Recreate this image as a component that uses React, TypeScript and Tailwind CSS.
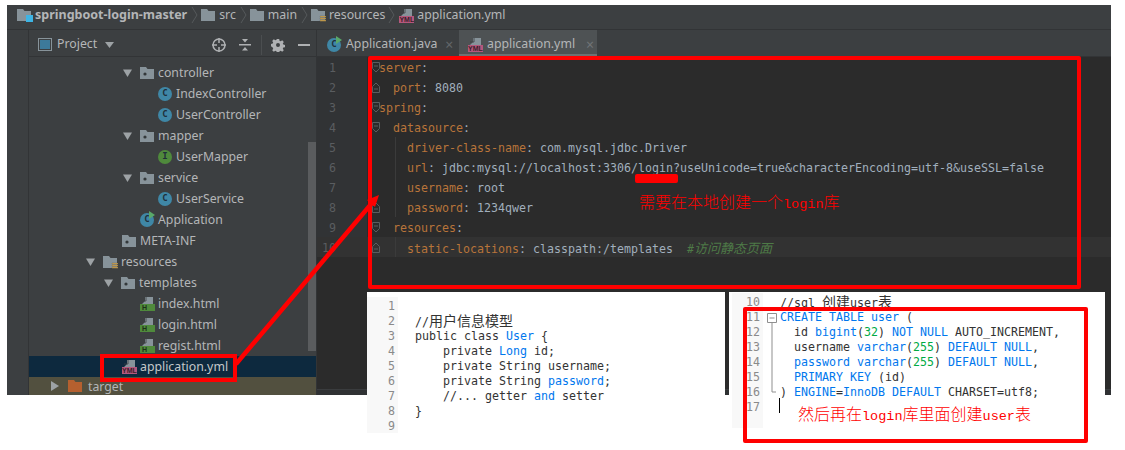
import React from 'react';

const uiFont = "font-['Noto_Sans','Noto_Sans_CJK_SC',sans-serif]";
const monoFont = "font-['DejaVu_Sans_Mono','Noto_Sans_CJK_SC',monospace]";

const Folder = ({ lines, blue, orange }: { lines?: boolean; blue?: boolean; orange?: boolean }) => (
    <svg width="16" height="14" viewBox="0 0 16 14" className="shrink-0">
        <path d="M0 1h6l1.5 2H14v10H0z" fill={orange ? '#b5602f' : '#87939a'} />
        {lines && <path d="M9 8h6v1.2H9zM9 10h6v1.2H9zM9 12h6v1.2H9z" fill="#d5a94e" stroke="#3c3f41" strokeWidth="0.2" />}
        {blue && <rect x="9" y="7" width="7" height="7" fill="#3db4e4" />}
    </svg>
);

const PackageFolder = () => (
    <svg width="14" height="14" viewBox="0 0 14 14" className="shrink-0">
        <path d="M0 1h6l1.5 2H14v10H0z" fill="#87939a" />
        <circle cx="5" cy="8" r="1.6" fill="#33383a" />
    </svg>
);

const Round = ({ letter, bg, run }: { letter: string; bg: string; run?: boolean }) => (
    <span className={`relative flex h-[14px] w-[14px] shrink-0 items-center justify-center rounded-full text-[9px] font-bold leading-none text-[#20303a] ${bg} ${monoFont}`}>
        {letter}
        {run && (
            <svg width="8" height="8" viewBox="0 0 8 8" className="absolute -right-[2px] -top-[2px]">
                <path d="M1 0l6 4-6 4z" fill="#59a869" />
            </svg>
        )}
    </span>
);

const FileBadge = ({ label, band, text }: { label: string; band: string; text: string }) => (
    <span className="relative block h-[15px] w-[15px] shrink-0">
        <svg width="15" height="9" viewBox="0 0 15 9" className="absolute left-0 top-0">
            <path d="M2 8l3-3V1h8v7z" fill="#87939a" />
            <path d="M6 1v4H2" fill="none" stroke="#3c3f41" strokeWidth="0.8" />
        </svg>
        <span className={`absolute bottom-0 left-0 flex h-[7px] w-[15px] items-center justify-center font-['Liberation_Sans',sans-serif] text-[7px] font-bold leading-none ${band} ${text}`}>
            {label}
        </span>
    </span>
);

const Html = () => <FileBadge label="H" band="bg-[#4f8a3c]" text="text-[#1d2f18] justify-start pl-[2px]" />;
const Yml = () => <FileBadge label="YML" band="bg-[#b4577c]" text="text-[#3a1f2b]" />;

const Chevron = () => (
    <svg width="7" height="18" viewBox="0 0 7 18" className="shrink-0">
        <path d="M1 1l5 8-5 8" fill="none" stroke="#55595b" strokeWidth="1" />
    </svg>
);

const Arrow = ({ open }: { open?: boolean }) => (
    <svg width="10" height="10" viewBox="0 0 10 10" className="shrink-0">
        {open ? <path d="M0 1.5h9L4.5 9z" fill="#9da2a5" /> : <path d="M1 0l8 5-8 5z" fill="#9da2a5" />}
    </svg>
);

const TreeRow = ({ pad, arrow, icon, label, className }: { pad: string; arrow?: boolean; icon: React.ReactNode; label: string; className?: string }) => (
    <div className={`flex h-[21px] items-center ${pad} ${className ?? ''}`}>
        {arrow && <span className="mr-[7px]"><Arrow open /></span>}
        <span className="mr-[4px] flex w-[14px] justify-start">{icon}</span>
        <span className="pt-[2px]">{label}</span>
    </div>
);

const Tree = () => (
    <div className={`pt-[5px] text-[12.3px] text-[#b4b6b8] ${uiFont}`}>
        <TreeRow pad="pl-[94px]" arrow icon={<PackageFolder />} label="controller" />
        <TreeRow pad="pl-[129px]" icon={<Round letter="C" bg="bg-[#3f87a6]" />} label="IndexController" />
        <TreeRow pad="pl-[129px]" icon={<Round letter="C" bg="bg-[#3f87a6]" />} label="UserController" />
        <TreeRow pad="pl-[94px]" arrow icon={<PackageFolder />} label="mapper" />
        <TreeRow pad="pl-[129px]" icon={<Round letter="I" bg="bg-[#4f8a3c]" />} label="UserMapper" />
        <TreeRow pad="pl-[94px]" arrow icon={<PackageFolder />} label="service" />
        <TreeRow pad="pl-[129px]" icon={<Round letter="C" bg="bg-[#3f87a6]" />} label="UserService" />
        <TreeRow pad="pl-[111px]" icon={<Round letter="C" bg="bg-[#3f87a6]" run />} label="Application" />
        <TreeRow pad="pl-[93px]" icon={<PackageFolder />} label="META-INF" />
        <TreeRow pad="pl-[57px]" arrow icon={<Folder lines />} label="resources" />
        <TreeRow pad="pl-[75px]" arrow icon={<PackageFolder />} label="templates" />
        <TreeRow pad="pl-[111px]" icon={<Html />} label="index.html" />
        <TreeRow pad="pl-[111px]" icon={<Html />} label="login.html" />
        <TreeRow pad="pl-[111px]" icon={<Html />} label="regist.html" />
        <TreeRow pad="pl-[93px]" icon={<Yml />} label="application.yml" className="bg-[#0d293e] text-[#c4c8ca]" />
        <div className="flex h-[18px] items-center bg-[#52503f] pl-[21px]">
            <span className="mr-[8px]"><Arrow /></span>
            <span className="mr-[4px]"><Folder orange /></span>
            <span className="pt-[2px] leading-[16px]">target</span>
        </div>
    </div>
);

const Key = ({ children }: { children: React.ReactNode }) => <span className="text-[#b8743a]">{children}</span>;

const FoldMark = ({ shape }: { shape: 'top' | 'bottom' }) => (
    <svg width="8" height="11" viewBox="0 0 8 11" className="absolute left-[5px] top-[5px]">
        {shape === 'top' ? (
            <path d="M.5.5h7v6l-3.5 3.5-3.5-3.5zM2 4h4" fill="none" stroke="#5a5d5f" />
        ) : (
            <path d="M.5 10.5h7v-6l-3.5-3.5-3.5 3.5zM2 7h4" fill="none" stroke="#5a5d5f" />
        )}
    </svg>
);

type YamlLine = { n: number; indent: string; fold?: 'top' | 'bottom'; guide?: boolean; current?: boolean; body: React.ReactNode };

const yamlLines: YamlLine[] = [
    { n: 1, indent: 'pl-0', fold: 'top', body: <><Key>server</Key>:</> },
    { n: 2, indent: 'pl-[14px]', fold: 'bottom', body: <><Key>port</Key>: 8080</> },
    { n: 3, indent: 'pl-0', fold: 'top', body: <><Key>spring</Key>:</> },
    { n: 4, indent: 'pl-[14px]', fold: 'top', body: <><Key>datasource</Key>:</> },
    { n: 5, indent: 'pl-[28px]', guide: true, body: <><Key>driver-class-name</Key>: com.mysql.jdbc.Driver</> },
    { n: 6, indent: 'pl-[28px]', guide: true, body: <><Key>url</Key>: jdbc:mysql://localhost:3306/login?useUnicode=true&amp;characterEncoding=utf-8&amp;useSSL=false</> },
    { n: 7, indent: 'pl-[28px]', guide: true, body: <><Key>username</Key>: root</> },
    { n: 8, indent: 'pl-[28px]', guide: true, fold: 'bottom', body: <><Key>password</Key>: 1234qwer</> },
    { n: 9, indent: 'pl-[14px]', fold: 'top', body: <><Key>resources</Key>:</> },
    {
        n: 10,
        indent: 'pl-[28px]',
        guide: true,
        fold: 'bottom',
        current: true,
        body: (
            <>
                <Key>static-locations</Key>: classpath:/templates{'  '}
                <span className="italic text-[#4e7a47]">#<span className="text-[13px]">访问静态页面</span></span>
            </>
        ),
    },
];

const YamlEditor = () => (
    <div className={`flex-1 bg-[#2b2b2b] text-[11.63px] leading-[23px] text-[#a1afbd] ${monoFont}`}>
        {yamlLines.map((line) => (
            <div key={line.n} className={`flex h-[20px] items-start ${line.current ? 'bg-[#323232]' : ''}`}>
                <div className={`h-full w-[50px] pr-[31px] text-right text-[#5a5d60] ${line.current ? 'bg-[#323232]' : 'bg-[#313335]'}`}>
                    {line.n}
                </div>
                <div className="relative h-full w-[12px]">{line.fold && <FoldMark shape={line.fold} />}</div>
                <div className={`relative h-full whitespace-pre ${line.indent}`}>
                    {line.guide && <span className="absolute left-[16px] top-0 h-[20px] w-px bg-[#3b3b3b]" />}
                    {line.body}
                </div>
            </div>
        ))}
    </div>
);

const Blue = ({ children }: { children: React.ReactNode }) => <span className="text-[#0077ee]">{children}</span>;
const Green = ({ children }: { children: React.ReactNode }) => <span className="text-[#00aa44]">{children}</span>;
const Cjk = ({ children }: { children: React.ReactNode }) => <span className="text-[14px]">{children}</span>;

const javaLines: React.ReactNode[] = [
    '',
    <>//<Cjk>用户信息模型</Cjk></>,
    <>public class <Blue>User</Blue> {'{'}</>,
    <>    private <Blue>Long</Blue> id;</>,
    <>    private String username;</>,
    <>    private String <Blue>password</Blue>;</>,
    <>    //... getter <Blue>and</Blue> setter</>,
    <>{'}'}</>,
    '',
];

const sqlLines: React.ReactNode[] = [
    <>//sql <Cjk>创建</Cjk>user<Cjk>表</Cjk></>,
    <><Blue>CREATE TABLE user</Blue> (</>,
    <>  id <Blue>bigint</Blue>(<Green>32</Green>) <Blue>NOT NULL</Blue> AUTO_INCREMENT,</>,
    <>  username <Blue>varchar</Blue>(<Green>255</Green>) <Blue>DEFAULT NULL</Blue>,</>,
    <>  <Blue>password varchar</Blue>(<Green>255</Green>) <Blue>DEFAULT NULL</Blue>,</>,
    <>  <Blue>PRIMARY KEY</Blue> (id)</>,
    <>) <Blue>ENGINE</Blue>=<Blue>InnoDB DEFAULT</Blue> CHARSET=utf8;</>,
    <span className="ml-[-1px] inline-block h-[15px] w-px bg-black align-top" />,
];

const Snippet = ({ lines, start, gutterClass, codeClass }: { lines: React.ReactNode[]; start: number; gutterClass: string; codeClass: string }) => (
    <div className={`flex items-start text-[11.63px] leading-[19px] text-[#333] ${monoFont}`}>
        <div className={`bg-[#f8f8f8] text-right text-[#8a8a8a] ${gutterClass}`}>
            {lines.map((_, i) => <div key={i} className="h-[15px]">{start + i}</div>)}
        </div>
        <div className={codeClass}>
            {lines.map((line, i) => <div key={i} className="h-[15px] whitespace-pre">{line}</div>)}
        </div>
    </div>
);

const RedText = ({ children, className }: { children: React.ReactNode; className: string }) => (
    <div className={`absolute whitespace-nowrap font-['Noto_Sans_CJK_SC',sans-serif] text-[16px] font-light leading-[20px] text-[#ff0000] ${className}`}>
        {children}
    </div>
);
const Latin = ({ children }: { children: React.ReactNode }) => (
    <span className="font-['Liberation_Mono',monospace] text-[13.5px] font-normal">{children}</span>
);

export default function App() {
    return (
        <div className="relative h-[450px] w-[1125px] overflow-hidden bg-white">
            <div className="pl-[7px] pt-[5px]">
                <div className={`flex h-[390px] w-[1104px] flex-col bg-[#3c3f41] text-[#b4b6b8] ${uiFont}`}>
                    {/* Breadcrumb */}
                    <div className="flex h-[25px] shrink-0 items-center border-b border-[#323436] pb-[4px] pl-[10px] text-[12.3px]">
                        <Folder blue />
                        <span className="ml-[2px] text-[12.5px] font-bold">springboot-login-master</span>
                        <span className="ml-[4px] mr-[3px]"><Chevron /></span>
                        <Folder />
                        <span className="ml-[2px]">src</span>
                        <span className="ml-[4px] mr-[3px]"><Chevron /></span>
                        <Folder />
                        <span className="ml-[2px]">main</span>
                        <span className="ml-[4px] mr-[3px]"><Chevron /></span>
                        <Folder lines />
                        <span className="ml-[2px]">resources</span>
                        <span className="ml-[3px] mr-[4px]"><Chevron /></span>
                        <Yml />
                        <span className="ml-[3px]">application.yml</span>
                    </div>

                    <div className="flex min-h-0 flex-1">
                        {/* Side stripe */}
                        <div className="w-[22px] shrink-0 border-r border-[#323436]" />

                        {/* Project panel */}
                        <div className="relative w-[288px] shrink-0 overflow-hidden border-r border-[#323436]">
                            <div className="flex h-[27px] items-center border-b border-[#323436] pl-[9px] pt-[3px] text-[12.3px]">
                                <span className="flex h-[13px] w-[14px] items-center justify-center border border-[#87939a]">
                                    <span className="h-[9px] w-[10px] bg-[#3d7a9a]" />
                                </span>
                                <span className="ml-[5px]">Project</span>
                                <svg width="10" height="6" viewBox="0 0 10 6" className="ml-[8px]"><path d="M0 0h9L4.5 6z" fill="#9da2a5" /></svg>
                                <svg width="16" height="16" viewBox="0 0 16 16" className="ml-[96px]" fill="none" stroke="#afb1b3" strokeWidth="1.5">
                                    <circle cx="8" cy="8" r="6" />
                                    <path d="M8 1v5M8 10v5M1 8h5M10 8h5" />
                                </svg>
                                <svg width="14" height="14" viewBox="0 0 14 14" className="ml-[11px]" fill="#afb1b3">
                                    <path d="M1 6h12v1.4H1zM4 1h6L7 4.5zM4 12.5h6L7 9z" />
                                </svg>
                                <span className="ml-[9px] h-[20px] w-px bg-[#4b4e50]" />
                                <svg width="14" height="14" viewBox="0 0 14 14" className="ml-[9px]" fill="#afb1b3">
                                    <path fillRule="evenodd" d="M5.8 1h2.4l.3 1.8 1.2.5 1.5-1 1.6 1.6-1 1.5.5 1.2 1.7.3v2.3l-1.7.3-.5 1.2 1 1.5-1.6 1.6-1.5-1-1.2.5-.3 1.7H5.8l-.3-1.7-1.2-.5-1.5 1-1.6-1.6 1-1.5-.5-1.2L0 8.2V5.9l1.7-.3.5-1.2-1-1.5 1.6-1.6 1.5 1 1.2-.5zM7 5a2 2 0 100 4 2 2 0 000-4z" />
                                </svg>
                                <span className="ml-[13px] h-[2px] w-[12px] bg-[#afb1b3]" />
                            </div>
                            <Tree />
                            <div className="absolute left-[279px] top-[112px] h-[209px] w-[8px] bg-[#5a5c5e]" />
                        </div>

                        {/* Editor */}
                        <div className="flex min-w-0 flex-1 flex-col">
                            <div className="flex h-[27px] shrink-0 items-stretch border-b border-[#323436] text-[12.3px]">
                                <div className="flex w-[142px] items-center pl-[10px] pt-[3px]">
                                    <Round letter="C" bg="bg-[#3f87a6]" run />
                                    <span className="ml-[5px]">Application.java</span>
                                    <span className="ml-[8px] text-[14px] leading-none text-[#63676a]">×</span>
                                </div>
                                <div className="flex w-[138px] items-center border-b-2 border-[#6e7173] bg-[#4e5254] pl-[9px] pt-[5px]">
                                    <Yml />
                                    <span className="ml-[4px]">application.yml</span>
                                    <span className="ml-[11px] text-[14px] leading-none text-[#707477]">×</span>
                                </div>
                            </div>
                            <YamlEditor />
                            <div className="h-[6px] shrink-0 border-t border-[#3a3c3e] bg-[#2f3133]" />
                        </div>
                    </div>
                </div>
            </div>

            {/* Pasted code snippets */}
            <div className="absolute left-[367px] top-[292px] h-[141px] w-[358px] bg-white pt-[5px]">
                <Snippet lines={javaLines} start={1} gutterClass="w-[31px] pb-[1px] pr-[3px]" codeClass="pl-[17px]" />
            </div>
            <div className="absolute left-[729px] top-[292px] h-[158px] w-[376px] bg-white pl-[3px] pt-[1px]">
                <Snippet lines={sqlLines} start={10} gutterClass="w-[31px] pb-[15px] pr-[3px]" codeClass="pl-[17px]" />
            </div>
            <svg width="12" height="90" viewBox="0 0 12 90" className="absolute left-[766px] top-[312px]" fill="none" stroke="#8f8f8f">
                <path d="M1.5 1.5h9v9h-9zM3.5 6h5M6 10.5v69.5h4" />
            </svg>

            {/* Red annotations */}
            <div className="absolute left-[368px] top-[56px] h-[233px] w-[713px] rounded-[2px] border-4 border-[#ff0000]" />
            <div className="absolute left-[743px] top-[307px] h-[136px] w-[345px] rounded-[2px] border-4 border-[#ff0000]" />
            <div className="absolute left-[100px] top-[354px] h-[28px] w-[137px] border-4 border-[#ff0000]" />
            <div className="absolute left-[635px] top-[174px] h-[9px] w-[43px] rounded-[2px] bg-[#ff0000]" />
            <svg width="1125" height="450" viewBox="0 0 1125 450" className="pointer-events-none absolute left-0 top-0">
                <path d="M236 364L372 203" stroke="#ff0000" strokeWidth="4.5" />
                <path d="M379 195L367 200L375 207z" fill="#ff0000" />
            </svg>
            <RedText className="left-[639px] top-[191px]">需要在本地创建一个<Latin>login</Latin>库</RedText>
            <RedText className="left-[798px] top-[403px]">然后再在<Latin>login</Latin>库里面创建<Latin>user</Latin>表</RedText>
        </div>
    );
}
